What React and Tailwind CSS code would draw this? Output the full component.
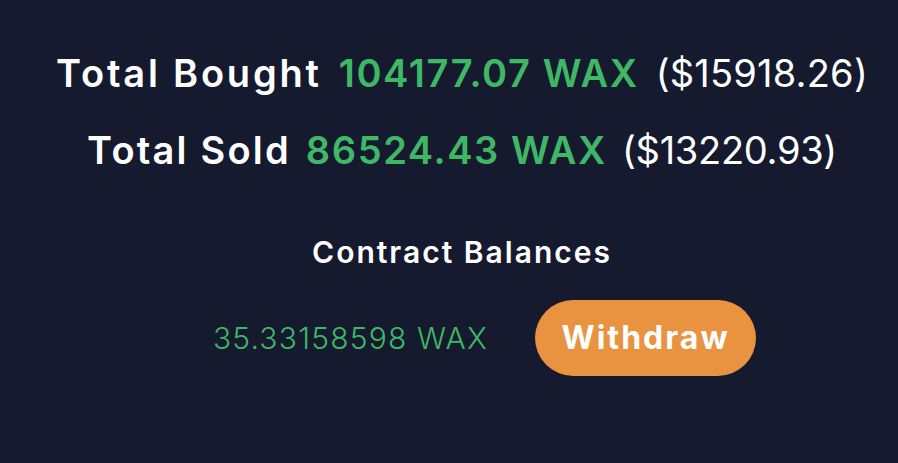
export default function App() {
    return (
        <div
            className="min-h-[463px] w-full bg-[#151a2e] pl-[26px] text-white"
            style={{ fontFamily: "Inter, 'Noto Sans', sans-serif" }}
        >
            <div className="flex flex-col items-center pt-[48px]">
                <div className="flex h-[50px] items-center gap-[17px] text-[38px] leading-none">
                    <span className="font-semibold tracking-[2.8px]">Total Bought</span>
                    <span className="font-semibold tracking-[1.6px] text-[#3fb865]">104177.07 WAX</span>
                    <span className="font-normal tracking-[0.2px]">($15918.26)</span>
                </div>
                <div className="mt-[27px] flex h-[50px] items-center gap-[15px] text-[38px] leading-none">
                    <span className="font-semibold tracking-[2.2px]">Total Sold</span>
                    <span className="font-semibold tracking-[1.6px] text-[#3fb865]">86524.43 WAX</span>
                    <span className="font-normal tracking-[-0.3px]">($13220.93)</span>
                </div>
                <h2 className="mt-[62px] text-[30px] font-semibold leading-none tracking-[2px]">
                    Contract Balances
                </h2>
                <div className="mt-[33px] flex items-center gap-[47px] pl-[45px]">
                    <span className="text-[30px] font-light tracking-[1.2px] text-[#3fb865]">
                        35.33158598 WAX
                    </span>
                    <button className="h-[76px] w-[221px] rounded-full bg-[#e9923f] text-[32px] font-bold tracking-[2px] text-white">
                        Withdraw
                    </button>
                </div>
            </div>
        </div>
    );
}
